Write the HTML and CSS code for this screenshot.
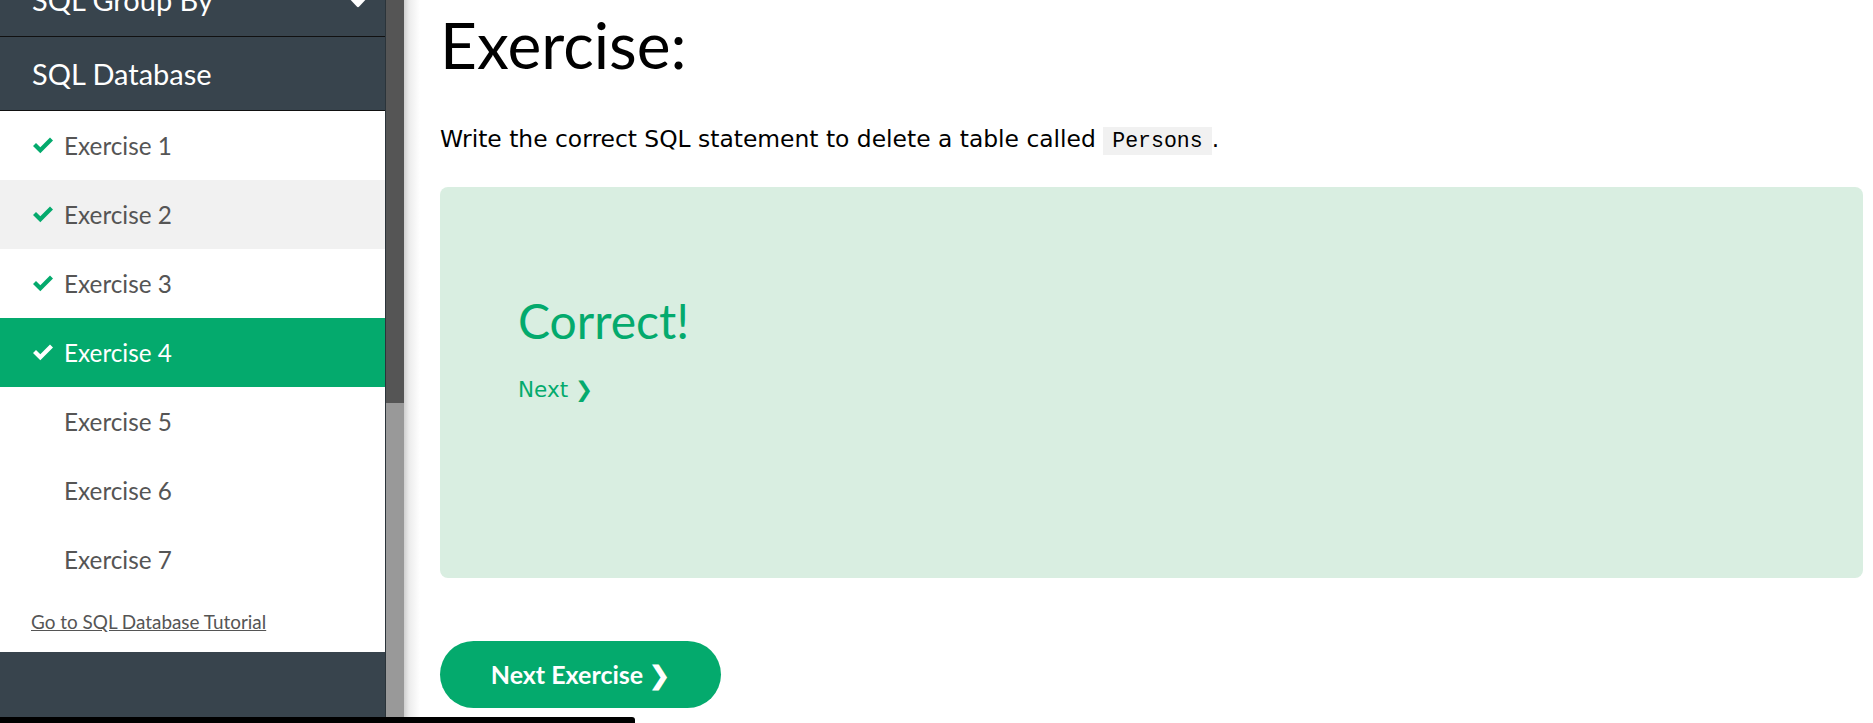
FILE: index.html
```html
<!DOCTYPE html>
<html lang="en">
<head>
<meta charset="utf-8">
<title>SQL Exercise</title>
<link rel="stylesheet" href="styles.css">
</head>
<body>
<div class="page">
  <aside class="sidebar">
    <div class="sidebar-scroll">
      <div class="topic">
        <span>SQL Group By</span>
        <svg class="caret" width="20" height="12" viewBox="0 0 20 12"><path d="M2 1 H18 Q20 1 18.6 2.6 L11.2 10.6 Q10 11.8 8.8 10.6 L1.4 2.6 Q0 1 2 1 Z" fill="#fff"/></svg>
      </div>
      <div class="topic">
        <span>SQL Database</span>
      </div>
      <ul class="ex-list">
        <li class="ex"><svg class="check" width="22" height="17" viewBox="0 0 22 17"><path d="M1 9 L4 6 L8.3 10.3 L18 0.6 L21 3.6 L8.3 16.3 Z" fill="#04AA6D"/></svg><span>Exercise 1</span></li>
        <li class="ex ex-hover"><svg class="check" width="22" height="17" viewBox="0 0 22 17"><path d="M1 9 L4 6 L8.3 10.3 L18 0.6 L21 3.6 L8.3 16.3 Z" fill="#04AA6D"/></svg><span>Exercise 2</span></li>
        <li class="ex"><svg class="check" width="22" height="17" viewBox="0 0 22 17"><path d="M1 9 L4 6 L8.3 10.3 L18 0.6 L21 3.6 L8.3 16.3 Z" fill="#04AA6D"/></svg><span>Exercise 3</span></li>
        <li class="ex ex-active"><svg class="check" width="22" height="17" viewBox="0 0 22 17"><path d="M1 9 L4 6 L8.3 10.3 L18 0.6 L21 3.6 L8.3 16.3 Z" fill="#fff"/></svg><span>Exercise 4</span></li>
        <li class="ex ex-todo"><span>Exercise 5</span></li>
        <li class="ex ex-todo"><span>Exercise 6</span></li>
        <li class="ex ex-todo"><span>Exercise 7</span></li>
      </ul>
      <div class="tut-link"><a href="#">Go to SQL Database Tutorial</a></div>
    </div>
  </aside>
  <div class="scrollbar">
    <div class="sb-upper"></div>
    <div class="sb-lower"></div>
  </div>
  <main class="main">
    <h1 class="title">Exercise:</h1>
    <p class="task">Write the correct SQL statement to delete a table called <code class="code">Persons</code>.</p>
    <div class="result">
      <h2 class="correct">Correct!</h2>
      <a class="next-link" href="#">Next ❯</a>
    </div>
    <a class="next-btn" href="#">Next Exercise ❯</a>
  </main>
</div>
<div class="taskbar"></div>
</body>
</html>
```

FILE: styles.css
```css
* { box-sizing: border-box; }

html, body {
  margin: 0;
  padding: 0;
  height: 723px;
  overflow: hidden;
  background: #fff;
}

.page {
  display: flex;
  height: 723px;
}

.sidebar {
  width: 386px;
  flex: 0 0 386px;
  background: #38444d;
  border-right: 1px solid #2b343a;
  overflow: hidden;
  font-family: "Lato", "Open Sans", sans-serif;
}

.sidebar-scroll {
  margin-top: -37px;
}

.topic {
  height: 74px;
  display: flex;
  align-items: center;
  justify-content: space-between;
  padding: 0 17px 0 32px;
  color: #fff;
  font-size: 29px;
  border-bottom: 1px solid #111;
}

.caret { display: block; margin-top: 4px; }

.ex-list {
  list-style: none;
  margin: 0;
  padding: 0;
  background: #fff;
}

.ex {
  height: 69px;
  display: flex;
  align-items: center;
  padding-left: 32px;
  font-size: 24.3px;
  color: #555;
}

.ex .check { margin-right: 10px; flex: 0 0 auto; }

.ex-todo { padding-left: 64px; }

.ex-hover { background: #f1f1f1; }

.ex-active { background: #04AA6D; color: #fff; }

.tut-link {
  height: 58px;
  background: #fff;
  padding: 16px 0 0 31px;
  font-size: 18.9px;
}

.tut-link a { color: #555; text-decoration: underline; }

.scrollbar {
  width: 18px;
  flex: 0 0 18px;
  display: flex;
  flex-direction: column;
}

.sb-upper { height: 403px; background: #555; }
.sb-lower { flex: 1; background: #999; }

.main {
  flex: 1;
  padding: 7px 10px 0 36px;
  background: linear-gradient(to right, #cfcfcf 0, #ececec 5px, #fff 16px) no-repeat;
  background-size: 16px 100%;
}

.title {
  margin: 0;
  font-family: "Lato", "Open Sans", sans-serif;
  font-weight: 400;
  font-size: 64px;
  line-height: 1.2;
  color: #000;
}

.task {
  margin: 38px 0 0 0;
  font-family: "DejaVu Sans", Verdana, sans-serif;
  font-size: 23.4px;
  line-height: 34px;
  color: #000;
}

.code {
  font-family: "Liberation Mono", "DejaVu Sans Mono", monospace;
  font-size: 21.5px;
  background: #f1f1f1;
  padding: 2px 9px;
  color: #000;
}

.result {
  margin-top: 29px;
  height: 391px;
  background: #d9eee1;
  border-radius: 8px;
  padding: 105px 0 0 78px;
}

.correct {
  margin: 0;
  font-family: "Lato", "Open Sans", sans-serif;
  font-weight: 400;
  font-size: 48px;
  line-height: 1.2;
  color: #04AA6D;
}

.next-link {
  display: inline-block;
  margin-top: 28px;
  font-family: "DejaVu Sans", Verdana, sans-serif;
  font-size: 21.5px;
  color: #04AA6D;
  text-decoration: none;
}

.next-btn {
  display: flex;
  align-items: center;
  justify-content: center;
  margin-top: 63px;
  width: 281px;
  height: 67px;
  border-radius: 34px;
  background: #04AA6D;
  color: #fff;
  font-family: "Lato", "Open Sans", sans-serif;
  font-weight: 700;
  font-size: 25px;
  text-decoration: none;
}

.taskbar {
  position: fixed;
  left: 0;
  bottom: 0;
  width: 635px;
  height: 6px;
  background: #000;
  border-top-right-radius: 3px;
}
```
